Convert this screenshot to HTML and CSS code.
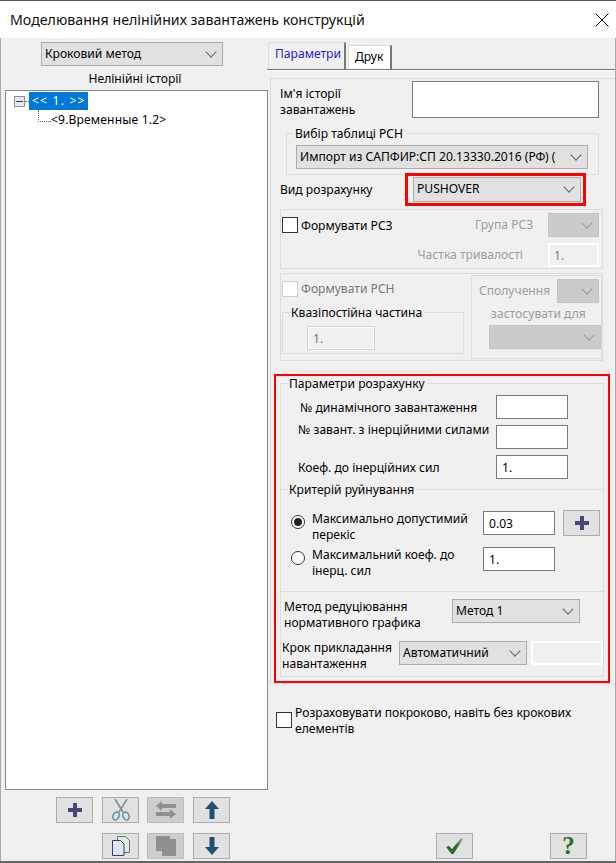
FILE: index.html
```html
<!DOCTYPE html>
<html lang="uk">
<head>
    <meta charset="UTF-8">
    <meta name="viewport" content="width=device-width, initial-scale=1.0">
    <title>Моделювання нелінійних завантажень конструкцій</title>
    <link rel="stylesheet" href="styles.css">
</head>
<body>
    <div class="window">
        <div class="titlebar">
            <span class="title">Моделювання нелінійних завантажень конструкцій</span>
            <svg class="close" width="14" height="14" viewBox="0 0 14 14"><path d="M.5.5l13 13M13.5.5l-13 13" stroke="#111" fill="none"/></svg>
        </div>

        <div class="content">
            <!-- ліва частина -->
            <div class="left">
                <div class="combo method-combo">Кроковий метод</div>
                <div class="tree-title">Нелінійні історії</div>
                <div class="tree">
                    <div class="tree-root">
                        <span class="toggle"></span>
                        <span class="tree-dots"></span>
                        <span class="tree-selected">&lt;&lt; 1. &gt;&gt;</span>
                    </div>
                    <div class="tree-child">&lt;9.Временные 1.2&gt;</div>
                </div>
                <div class="toolbar">
                    <div class="btn">
                        <svg width="16" height="16" viewBox="0 0 16 16"><path d="M6 1h4v5h5v4h-5v5H6v-5H1V6h5z" fill="#45457f"/></svg>
                    </div>
                    <div class="btn">
                        <svg width="26" height="22" viewBox="0 0 26 22"><path d="M7 0l8 13M19 0l-8 13" stroke="#8b8b8b" stroke-width="1.6" fill="none"/><ellipse cx="8" cy="17" rx="3" ry="4.2" transform="rotate(25 8 17)" fill="none" stroke="#5f96b4" stroke-width="1.6"/><ellipse cx="18" cy="17" rx="3" ry="4.2" transform="rotate(-25 18 17)" fill="none" stroke="#5f96b4" stroke-width="1.6"/></svg>
                    </div>
                    <div class="btn disabled">
                        <svg width="22" height="20" viewBox="0 0 22 20"><path d="M7 1v3h14v4H7v3L1 6zM15 9v3H1v4h14v3l6-5z" fill="#8f8f8f"/></svg>
                    </div>
                    <div class="btn">
                        <svg width="14" height="18" viewBox="0 0 14 18"><path d="M7 0l7 8H9.500v10h-5V8H0z" fill="#1f5172"/></svg>
                    </div>
                    <div class="btn second-row">
                        <svg width="18" height="20" viewBox="0 0 18 20"><path d="M5.500.5h8l4 4v12h-12z" fill="#dbeedb" stroke="#5a7a5a"/><path d="M.5 4.500h8l3.500 3.500v11.500H.500z" fill="#e2e5f8" stroke="#3c3c66"/></svg>
                    </div>
                    <div class="btn disabled">
                        <svg width="20" height="20" viewBox="0 0 20 20"><path d="M0 0h14v3h6v17H6v-5H0z" fill="#8f8f8f"/></svg>
                    </div>
                    <div class="btn">
                        <svg width="14" height="18" viewBox="0 0 14 18"><path d="M7 18l7-8H9.500V0h-5v10H0z" fill="#1f5172"/></svg>
                    </div>
                </div>
            </div>

            <!-- права частина -->
            <div class="right">
                <div class="tabs">
                    <div class="tab active">Параметри</div>
                    <div class="tab">Друк</div>
                </div>
                <div class="tab-line"></div>

                <div class="page">
                    <div class="name-row">
                        <div class="name-label">Ім'я історії<br>завантажень</div>
                        <input class="name-input" type="text">
                    </div>

                    <div class="group table-group">
                        <span class="legend">Вибір таблиці РСН</span>
                        <div class="combo table-combo">Импорт из САПФИР:СП 20.13330.2016 (РФ) (</div>
                    </div>

                    <div class="kind-row">
                        <div class="kind-label">Вид розрахунку</div>
                        <div class="red-mark"><div class="combo kind-combo">PUSHOVER</div></div>
                    </div>

                    <div class="group rsz-group">
                        <div class="rsz-row">
                            <span class="check"></span>
                            <span class="rsz-label">Формувати РСЗ</span>
                            <span class="off rsz-group-label">Група РСЗ</span>
                            <div class="combo off-combo small-combo"></div>
                        </div>
                        <div class="rsz-row2">
                            <span class="off">Частка тривалості</span>
                            <input class="field off-field small-field" type="text" value="1." disabled>
                        </div>
                    </div>

                    <div class="group rsn-group">
                        <div class="rsn-left">
                            <div class="rsn-check">
                                <span class="check check-off"></span>
                                <span class="rsn-label">Формувати РСН</span>
                            </div>
                            <div class="group quasi-group">
                                <span class="legend">Квазіпостійна частина</span>
                                <input class="field off-field quasi-field" type="text" value="1." disabled>
                            </div>
                        </div>
                        <div class="group combine-group">
                            <div class="combine-row">
                                <span class="off">Сполучення</span>
                                <div class="combo off-combo combine-combo"></div>
                            </div>
                            <div class="off apply-label">застосувати для</div>
                            <div class="combo off-combo apply-combo"></div>
                        </div>
                    </div>

                    <div class="red-frame">
                        <div class="group calc-group">
                            <span class="legend">Параметри розрахунку</span>
                            <div class="calc-row row-a">
                                <span class="calc-label label-a">№ динамічного завантаження</span>
                                <input class="field" type="text">
                            </div>
                            <div class="calc-row row-b">
                                <span class="calc-label label-b">№ завант. з інерційними силами</span>
                                <input class="field" type="text">
                            </div>
                            <div class="calc-row row-b">
                                <span class="calc-label label-c">Коеф. до інерційних сил</span>
                                <input class="field" type="text" value="1.">
                            </div>

                            <div class="divider criterion">
                                <span class="legend">Критерій руйнування</span>
                            </div>
                            <div class="radio-row first-radio">
                                <span class="radio radio-on"></span>
                                <span class="radio-text">Максимально допустимий<br>перекіс</span>
                                <input class="field" type="text" value="0.03">
                                <div class="btn plus-btn">
                                    <svg width="16" height="16" viewBox="0 0 16 16"><path d="M6 1h4v5h5v4h-5v5H6v-5H1V6h5z" fill="#45457f"/></svg>
                                </div>
                            </div>
                            <div class="radio-row second-radio">
                                <span class="radio"></span>
                                <span class="radio-text">Максимальний коеф. до<br>інерц. сил</span>
                                <input class="field" type="text" value="1.">
                            </div>
                            <div class="divider bottom-line"></div>

                            <div class="method-row">
                                <div class="method-label">Метод редуціювання<br>нормативного графика</div>
                                <div class="combo reduce-combo">Метод 1</div>
                            </div>
                            <div class="step-row">
                                <div class="step-label">Крок прикладання<br>навантаження</div>
                                <div class="combo step-combo">Автоматичний</div>
                                <input class="field off-field step-field" type="text" disabled>
                            </div>
                        </div>
                    </div>
                </div>

                <div class="stepwise">
                    <span class="check"></span>
                    <span>Розраховувати покроково, навіть без крокових<br>елементів</span>
                </div>

                <div class="footer">
                    <div class="btn">
                        <svg width="17" height="16" viewBox="0 0 17 16">
                            <defs><linearGradient id="okFade" x1="0" y1="1" x2="1" y2="0"><stop offset=".55" stop-color="#2c6e2c"/><stop offset="1" stop-color="#a8b8a8"/></linearGradient></defs>
                            <path d="M0 9l3-1 3 3L15 0l2 1L7.500 16h-2z" fill="url(#okFade)"/>
                        </svg>
                    </div>
                    <div class="btn help">?</div>
                </div>
            </div>
        </div>
    </div>
</body>
</html>
```

FILE: styles.css
```css
* {
    box-sizing: border-box;
}
body {
    margin: 0;
    font-family: "Noto Sans", sans-serif;
    font-size: 12.1px;
    line-height: 16px;
    color: #000;
}
.window {
    width: 616px;
    height: 863px;
    background-color: #f0f0f0;
    display: flex;
    flex-direction: column;
    border-bottom: 2px solid #666;
}
.titlebar {
    height: 38px;
    flex: none;
    background-color: #fff;
    border-top: 1px solid #555;
    display: flex;
    align-items: center;
    justify-content: space-between;
    padding: 0 7px 0 10px;
}
.title {
    font-size: 14.2px;
    color: #111;
}
.content {
    flex: 1;
    display: flex;
    border-left: 1px solid #aaa;
    border-right: 1px solid #aaa;
}

/* ліва частина */
.left {
    width: 268px;
    flex: none;
    padding-top: 4px;
}
.combo {
    position: relative;
    height: 24px;
    background-color: #e1e1e1;
    border: 1px solid #adadad;
    padding: 3px 20px 0 3px;
    white-space: nowrap;
    overflow: hidden;
}
.combo::after {
    content: "";
    position: absolute;
    right: 7px;
    top: 5px;
    width: 7px;
    height: 7px;
    border-right: 1px solid #666;
    border-bottom: 1px solid #666;
    transform: rotate(45deg);
}
.method-combo {
    width: 182px;
    margin-left: 40px;
}
.tree-title {
    width: 268px;
    height: 24px;
    padding-top: 5px;
    text-align: center;
}
.tree {
    width: 263px;
    height: 700px;
    margin-left: 4px;
    background-color: #fff;
    border: 1px solid #828790;
    padding-top: 1px;
}
.tree-root {
    display: flex;
    align-items: center;
    padding-left: 8px;
}
.toggle {
    position: relative;
    width: 11px;
    height: 11px;
    background-color: #e8e8ee;
    border: 1px solid #8a8f98;
}
.toggle::after {
    content: "";
    position: absolute;
    left: 1px;
    right: 1px;
    top: 4px;
    height: 1px;
    background-color: #1f3f9f;
}
.tree-dots {
    width: 4px;
    border-top: 1px dotted #666;
}
.tree-selected {
    width: 59px;
    height: 18px;
    padding: 1px 0 0 3px;
    background-color: #0078d7;
    color: #fff;
    letter-spacing: 1.2px;
    white-space: nowrap;
}
.tree-child {
    position: relative;
    margin: 1px 0 0 45px;
    height: 18px;
    padding-top: 1px;
    letter-spacing: 0.15px;
}
.tree-child::before {
    content: "";
    position: absolute;
    left: -13px;
    top: -1px;
    width: 12px;
    height: 11px;
    border-left: 1px dotted #666;
    border-bottom: 1px dotted #666;
}
.toolbar {
    display: grid;
    grid-template-columns: 46px 45px 46px 37px;
    grid-auto-rows: 26px;
    row-gap: 10px;
    margin: 7px 0 0 55px;
}
.second-row {
    grid-column: 2;
}
.btn {
    width: 37px;
    height: 26px;
    background-color: #e1e1e1;
    border: 1px solid #adadad;
    display: flex;
    align-items: center;
    justify-content: center;
}
.btn.disabled {
    background-color: #cdcdcd;
    border-color: #bdbdbd;
}
.help {
    font-family: "Liberation Serif", serif;
    font-size: 25px;
    font-weight: bold;
    color: #2c6e2c;
}

/* права частина */
.right {
    flex: 1;
    padding-top: 4px;
    display: flex;
    flex-direction: column;
}
.tabs {
    display: flex;
    align-items: flex-end;
    height: 27px;
    margin-left: -1px;
}
.tab {
    width: 44px;
    height: 24px;
    padding: 3px 0 0 6px;
    border: 1px solid #dcdcdc;
    border-right: 2px solid #777;
    border-bottom: none;
    background-color: #fff;
}
.tab.active {
    height: 27px;
    width: 78px;
    padding: 3px 0 0 6px;
    background-color: #f0f0f0;
    color: #2020e0;
    margin-right: 2px;
}
.tab-line {
    height: 2px;
    flex: none;
    margin-left: -2px;
    background-color: #777;
    border-bottom: 1px solid #fff;
}
.page {
    width: 345px;
    height: 606px;
    margin: 7px 0 0 1px;
    border: 1px solid #dcdcdc;
    border-right: none;
}
.group {
    position: relative;
    border: 1px solid #dcdcdc;
}
.legend {
    position: absolute;
    left: 7px;
    top: -8px;
    padding: 0 2px 0 1px;
    background-color: #f0f0f0;
    white-space: nowrap;
}
.field {
    width: 72px;
    height: 24px;
    padding: 0 0 0 5px;
    background-color: #fff;
    border: 1px solid #7a7a7a;
    border-radius: 0;
    font: inherit;
    color: #000;
    outline: none;
}
.off {
    color: #9d9d9d;
}
.off-field {
    background-color: #f0f0f0;
    border: 2px solid #fff;
    color: #777;
    padding-left: 4px;
}
.off-combo {
    background-color: #cbcbcb;
    border-color: #c4c4c4;
}
.off-combo::after {
    border-color: #999;
}
.check {
    width: 16px;
    height: 16px;
    flex: none;
    background-color: #fff;
    border: 1px solid #333;
}
.check-off {
    border-color: #d0d0d0;
}

.name-row {
    display: flex;
    height: 37px;
    margin-top: 2px;
}
.name-label {
    width: 141px;
    padding: 5px 0 0 9px;
}
.name-input {
    width: 187px;
    height: 37px;
    background-color: #fff;
    border: 1px solid #7a7a7a;
    border-radius: 0;
    outline: none;
}
.table-group {
    width: 313px;
    height: 42px;
    margin: 15px 0 0 15px;
    padding: 11px 0 0 9px;
}
.table-combo {
    width: 292px;
    height: 24px;
}
.kind-row {
    display: flex;
    height: 25px;
    margin-top: 2px;
    align-items: center;
}
.kind-label {
    width: 134px;
    padding-left: 9px;
}
.red-mark {
    position: relative;
    margin: -4px 0;
    padding: 1px 2px 1px 5px;
    border: 3px solid #f00;
}
.kind-combo {
    width: 168px;
    height: 25px;
}
.rsz-group {
    width: 323px;
    height: 60px;
    margin: 7px 0 0 9px;
}
.rsz-row {
    display: flex;
    align-items: center;
    height: 24px;
    margin-top: 3px;
    padding-left: 1px;
}
.rsz-label {
    width: 174px;
    margin: 2px 0 0 3px;
}
.rsz-group-label {
    width: 73px;
}
.small-combo {
    width: 51px;
}
.rsz-row2 {
    display: flex;
    justify-content: flex-end;
    align-items: center;
    gap: 25px;
    margin: 6px 3px 0 0;
}
.small-field {
    width: 51px;
}
.rsn-group {
    display: flex;
    width: 323px;
    height: 88px;
    margin: 4px 0 0 9px;
}
.rsn-left {
    width: 190px;
    padding-left: 1px;
}
.rsn-check {
    display: flex;
    align-items: center;
    margin-top: 7px;
    gap: 3px;
}
.rsn-label {
    color: #777;
}
.quasi-group {
    width: 182px;
    height: 42px;
    margin-top: 15px;
    padding: 13px 0 0 24px;
}
.quasi-field {
    width: 68px;
    border: 1px solid #d4d4d4;
    box-shadow: inset 0 0 0 1px #fff;
    padding-left: 5px;
}
.combine-group {
    width: 131px;
    height: 84px;
    margin-top: 1px;
    padding-left: 7px;
}
.combine-row {
    display: flex;
    align-items: center;
    justify-content: space-between;
    padding: 3px 2px 0 0;
}
.combine-combo {
    width: 42px;
}
.apply-label {
    margin: 3px 0 0 12px;
}
.apply-combo {
    width: 112px;
    margin: 3px 0 0 10px;
}

.red-frame {
    position: relative;
    width: 336px;
    height: 309px;
    margin: 13px 0 0 3px;
    padding: 7px 0 0 4px;
    border: 2px solid #f00;
}
.calc-group {
    width: 324px;
    height: 294px;
}
.calc-row {
    display: flex;
    height: 24px;
    justify-content: flex-end;
    padding-right: 35px;
}
.row-a {
    margin-top: 11px;
}
.row-b {
    margin-top: 6px;
}
.calc-label {
    width: 215px;
    white-space: nowrap;
}
.label-a {
    padding: 5px 0 0 19px;
}
.label-b {
    padding-left: 17px;
    margin-top: -3px;
}
.label-c {
    padding: 5px 0 0 17px;
}
.divider {
    position: relative;
    border-top: 1px solid #dcdcdc;
}
.criterion {
    margin-top: 10px;
}
.radio-row {
    display: flex;
    align-items: flex-start;
    height: 32px;
}
.first-radio {
    margin-top: 21px;
}
.second-radio {
    margin-top: 4px;
}
.radio {
    width: 14px;
    height: 14px;
    flex: none;
    margin: 4px 0 0 10px;
    border: 1px solid #333;
    border-radius: 50%;
    background-color: #fff;
    display: flex;
    align-items: center;
    justify-content: center;
}
.radio-on::after {
    content: "";
    width: 8px;
    height: 8px;
    border-radius: 50%;
    background-color: #222;
}
.radio-text {
    width: 171px;
    margin-left: 7px;
    white-space: nowrap;
}
.plus-btn {
    margin: -1px 0 0 8px;
}
.bottom-line {
    margin-top: 12px;
}
.method-row {
    display: flex;
    margin-top: 7px;
    padding-left: 3px;
}
.method-label {
    width: 168px;
    white-space: nowrap;
}
.reduce-combo {
    width: 128px;
    height: 24px;
}
.step-row {
    display: flex;
    margin-top: 10px;
    padding-left: 1px;
    gap: 4px;
}
.step-label {
    width: 113px;
    white-space: nowrap;
    margin-top: -1px;
}
.step-combo {
    width: 128px;
    height: 24px;
}
.step-field {
    width: 72px;
}

.stepwise {
    display: flex;
    align-items: center;
    gap: 3px;
    margin: 21px 0 0 7px;
    white-space: nowrap;
}
.stepwise .check {
    margin-top: -2px;
}
.footer {
    display: flex;
    gap: 77px;
    margin: auto 0 2px 167px;
}
```
